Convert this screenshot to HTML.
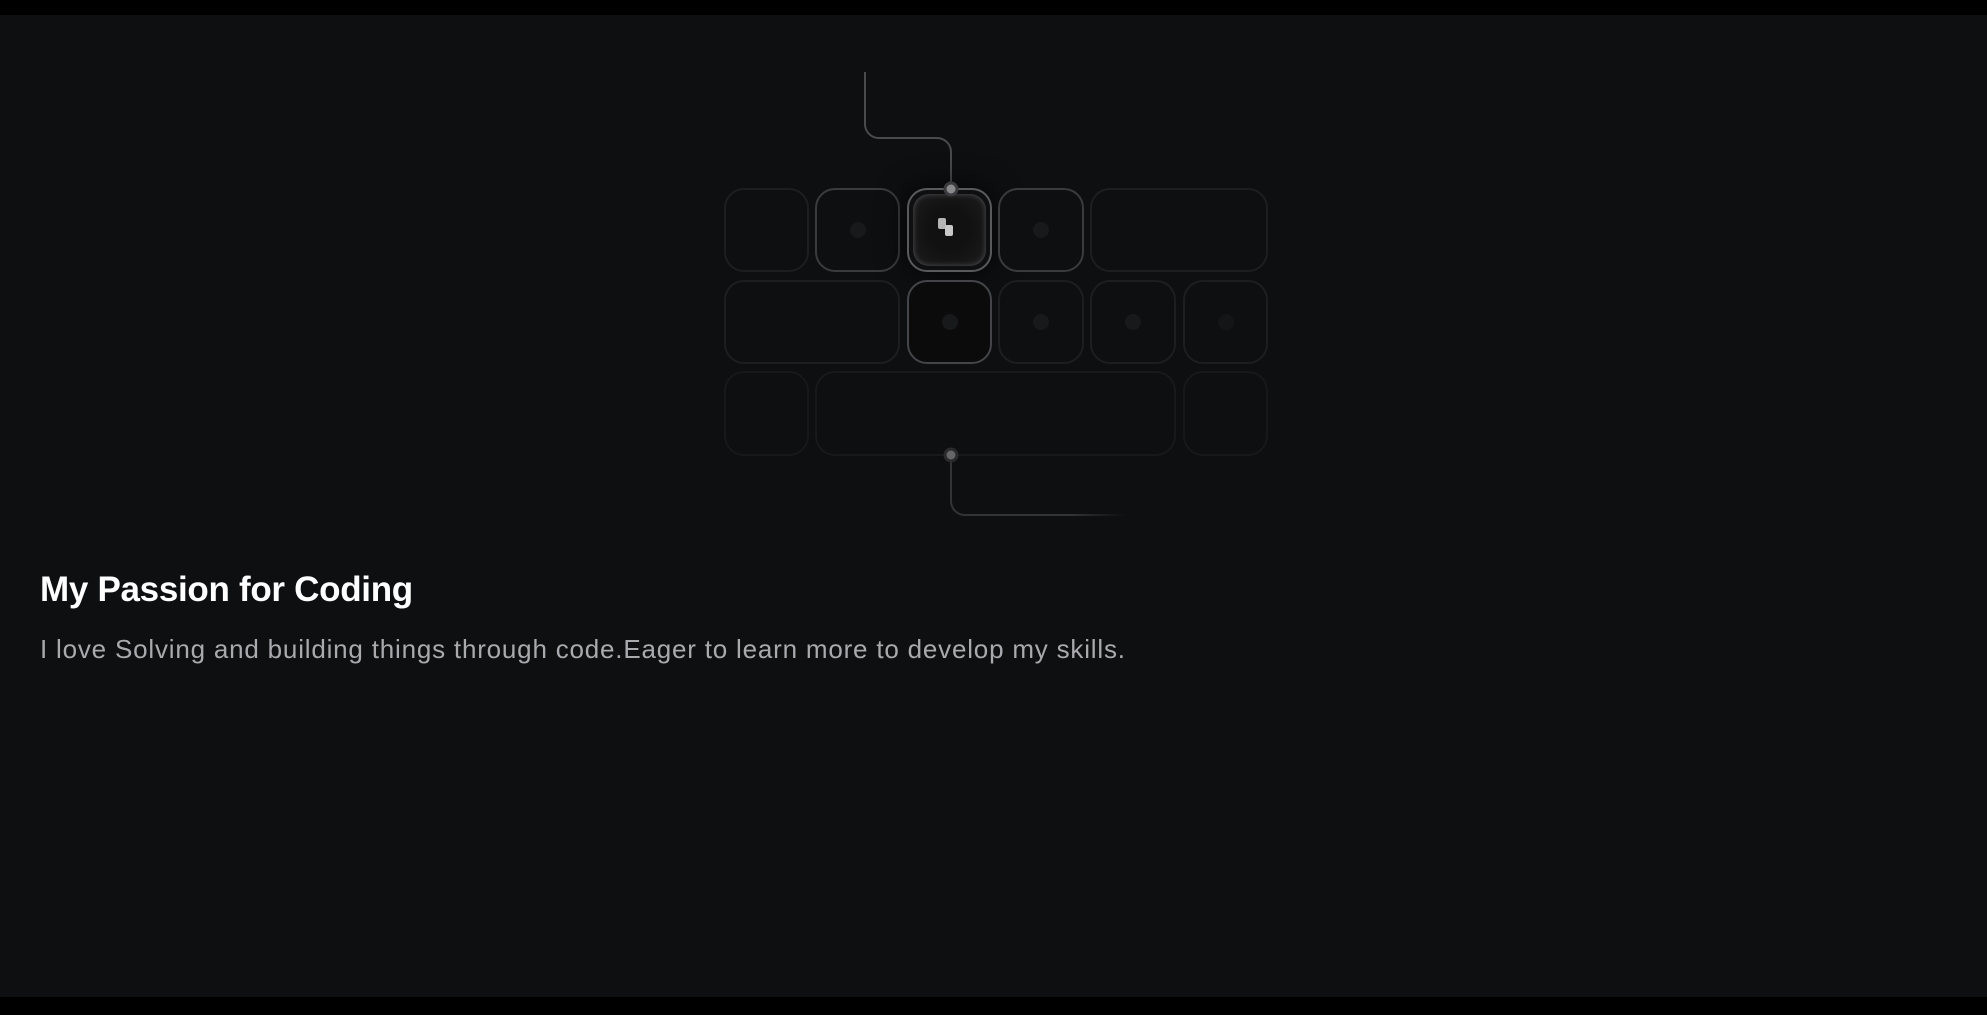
<!DOCTYPE html>
<html><head><meta charset="utf-8"><style>
html,body{margin:0;padding:0;width:1987px;height:1015px;overflow:hidden;background:#000;}
.main{position:absolute;left:0;top:15px;width:1987px;height:982px;background:#0e0f11;}
.k{position:absolute;border-radius:20px;box-sizing:border-box;border:2px solid #1d1e21;background:#0e0f11;}
.k.m{border-color:#3a3b3e;}
.dot{position:absolute;width:16px;height:16px;border-radius:50%;background:#18191b;left:50%;top:50%;margin:-8px 0 0 -8px;}
h1{position:absolute;left:40px;top:570px;margin:0;font:bold 35px "Liberation Sans",sans-serif;color:#fff;letter-spacing:-0.3px;}
p{position:absolute;left:40px;top:634px;margin:0;font:26px "Liberation Sans",sans-serif;color:#a9a9ae;letter-spacing:0.8px;}
</style></head><body>
<div class="main"></div>
<svg style="position:absolute;left:0;top:0" width="1987" height="1015">
<defs><linearGradient id="f" x1="0" x2="1"><stop offset="0.7" stop-color="#333" /><stop offset="1" stop-color="#333" stop-opacity="0"/></linearGradient></defs>
<path d="M865 72 V124 a14 14 0 0 0 14 14 H937 a14 14 0 0 1 14 14 V189" fill="none" stroke="#4a4a4d" stroke-width="2"/>
<path d="M951 455 V501 a14 14 0 0 0 14 14 H1125" fill="none" stroke="url(#f)" stroke-width="2"/>
</svg>
<div class="k" style="left:724px;top:188px;width:85px;height:84px"></div>
<div class="k m" style="left:815px;top:188px;width:85px;height:84px"><div class="dot"></div></div>
<div class="k" style="left:907px;top:188px;width:85px;height:84px;border-color:#5a5a5d;box-shadow:0 0 30px rgba(0,0,0,.8)"><div style="position:absolute;left:4px;top:4px;right:4px;bottom:4px;border-radius:16px;background:radial-gradient(circle,#111 40%,#1d1d1f 100%);box-shadow:inset 0 0 6px rgba(255,255,255,.25)"></div>
<div style="position:absolute;left:29px;top:28px;width:8px;height:11px;border-radius:2px;background:#b5b5b5"></div><div style="position:absolute;left:36px;top:35px;width:8px;height:11px;border-radius:2px;background:#c8c8c8"></div></div>
<div class="k m" style="left:998px;top:188px;width:86px;height:84px"><div class="dot"></div></div>
<div class="k" style="left:1090px;top:188px;width:178px;height:84px"></div>
<div class="k" style="left:724px;top:280px;width:176px;height:84px"></div>
<div class="k m" style="left:907px;top:280px;width:85px;height:84px;border-color:#444548;background:#0b0b0c"><div class="dot"></div></div>
<div class="k" style="left:998px;top:280px;width:86px;height:84px"><div class="dot"></div></div>
<div class="k" style="left:1090px;top:280px;width:86px;height:84px"><div class="dot"></div></div>
<div class="k" style="left:1183px;top:280px;width:85px;height:84px"><div class="dot" style="background:#141517"></div></div>
<div class="k" style="left:724px;top:371px;width:85px;height:85px;border-color:#17181b"></div>
<div class="k" style="left:815px;top:371px;width:361px;height:85px;border-color:#18191c"></div>
<div class="k" style="left:1183px;top:371px;width:85px;height:85px;border-color:#17181b"></div>
<svg style="position:absolute;left:0;top:0" width="1987" height="1015">
<circle cx="951" cy="189" r="6" fill="#8a8a8c" stroke="#3a3a3c" stroke-width="3"/>
<circle cx="951" cy="455" r="6" fill="#666" stroke="#2a2a2c" stroke-width="3"/>
</svg>
<h1>My Passion for Coding</h1>
<p>I love Solving and building things through code.Eager to learn more to develop my skills.</p>
</body></html>
